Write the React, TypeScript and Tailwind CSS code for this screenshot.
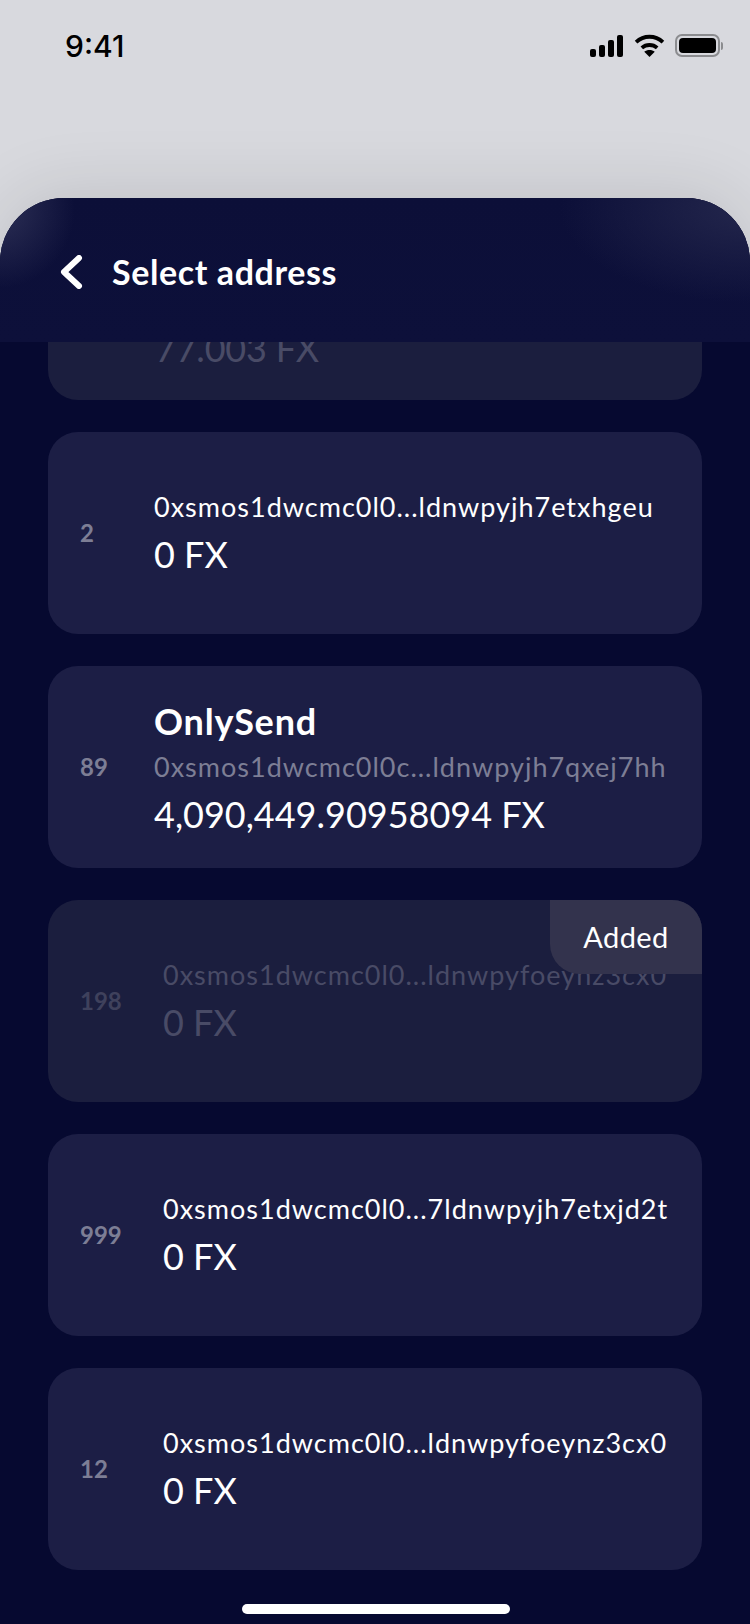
import type { ReactNode } from "react";

const font = "font-['Lato','Noto_Sans',sans-serif]";

function StatusBar() {
    return (
        <div className="flex h-[198px] items-start justify-between pl-[65px] pr-[27px] pt-[27px]">
            <span className="font-['Inter',sans-serif] text-[30px] font-medium leading-[38px] text-black">9:41</span>
            <div className="flex items-center pt-[7px]">
                <svg width="33" height="22" viewBox="0 0 33 22" fill="#000">
                    <rect x="0" y="14" width="6" height="8" rx="2" />
                    <rect x="9" y="10" width="6" height="12" rx="2" />
                    <rect x="18" y="5" width="6" height="17" rx="2" />
                    <rect x="27" y="0" width="6" height="22" rx="2" />
                </svg>
                <svg className="ml-[11px]" width="31" height="23" viewBox="0 0 32 24" fill="none" stroke="#000" strokeWidth="4">
                    <path d="M2 8.5C10 1 22 1 30 8.5" />
                    <path d="M8 14.5C12.5 10.5 19.5 10.5 24 14.5" />
                    <path d="M16 24L10.5 18.5C13.5 16 18.5 16 21.5 18.5Z" fill="#000" stroke="none" />
                </svg>
                <div className="ml-[10px] flex items-center">
                    <div className="h-[23px] w-[45px] rounded-[7px] border-2 border-[#8b8c8f] p-[2px]">
                        <div className="h-full w-full rounded-[4px] bg-black" />
                    </div>
                    <div className="ml-[1px] h-[8px] w-[2px] rounded-r-full bg-[#8b8c8f]" />
                </div>
            </div>
        </div>
    );
}

function Card({ num, numW, children, dim }: { num: string; numW: string; children: ReactNode; dim?: boolean }) {
    return (
        <div className={`relative flex h-[202px] shrink-0 items-center overflow-hidden rounded-[30px] pl-[32px] ${dim ? "bg-[#1b1e3e]" : "bg-[#1c1e45]"}`}>
            <span className={`${numW} shrink-0 text-[24px] font-bold ${dim ? "text-[#3f415c]" : "text-[#7d7e95]"}`}>{num}</span>
            <div className="flex flex-col pb-[2px]">{children}</div>
        </div>
    );
}

function Address({ text, muted, dim }: { text: string; muted?: boolean; dim?: boolean }) {
    const color = dim ? "text-[#494b66]" : muted ? "text-[#7d7e95]" : "text-white";
    return <div className={`whitespace-nowrap text-[27px] leading-[36px] tracking-[1px] ${color}`}>{text}</div>;
}

function Amount({ text, dim }: { text: string; dim?: boolean }) {
    return <div className={`mt-[8px] text-[36px] leading-[42px] ${dim ? "text-[#494b66]" : "text-white"}`}>{text}</div>;
}

export default function App() {
    return (
        <div className={`relative h-[1624px] w-[750px] overflow-hidden bg-[#d8d9de] ${font}`}>
            <StatusBar />
            <div className="flex h-[1426px] flex-col overflow-hidden rounded-t-[64px] bg-[#060930] shadow-[0_-6px_70px_rgba(0,0,0,0.11)]">
                <div className="relative z-10 flex h-[144px] shrink-0 items-center gap-[28px] bg-[radial-gradient(ellipse_75px_80px_at_0px_10px,#2c2f55,transparent),radial-gradient(ellipse_190px_95px_at_100%_10px,#23264c,transparent),linear-gradient(#0c0f38,#0d103a)] pl-[60px] pt-[4px]">
                    <svg width="24" height="34" viewBox="0 0 24 34" fill="none" stroke="#fff" strokeWidth="6" strokeLinecap="round" strokeLinejoin="round">
                        <path d="M19 3L4 17L19 31" />
                    </svg>
                    <span className="text-[34px] font-bold leading-none tracking-[0.6px] text-white">Select address</span>
                </div>
                <div className="flex flex-col gap-[32px] px-[48px]">
                    <div className="relative -mt-[144px] flex h-[202px] shrink-0 items-end rounded-[30px] bg-[#1b1e3e] pb-[31px] pl-[107px]">
                        <span className="text-[36px] leading-[42px] tracking-[-0.2px] text-[#494b66]">77.003 FX</span>
                    </div>
                    <Card num="2" numW="w-[74px]">
                        <Address text="0xsmos1dwcmc0l0...ldnwpyjh7etxhgeu" />
                        <Amount text="0 FX" />
                    </Card>
                    <Card num="89" numW="w-[74px]">
                        <div className="mb-[7px] mt-[2px] text-[36px] font-bold leading-[42px] tracking-[0.8px] text-white">OnlySend</div>
                        <Address text="0xsmos1dwcmc0l0c...ldnwpyjh7qxej7hh" muted />
                        <Amount text="4,090,449.90958094 FX" />
                    </Card>
                    <Card num="198" numW="w-[83px]" dim>
                        <Address text="0xsmos1dwcmc0l0...ldnwpyfoeynz3cx0" dim />
                        <Amount text="0 FX" dim />
                        <div className="absolute right-0 top-0 flex h-[74px] w-[152px] items-center justify-center rounded-bl-[30px] bg-[#33334d] text-[29px] tracking-[0.4px] text-white">
                            Added
                        </div>
                    </Card>
                    <Card num="999" numW="w-[83px]">
                        <Address text="0xsmos1dwcmc0l0...7ldnwpyjh7etxjd2t" />
                        <Amount text="0 FX" />
                    </Card>
                    <Card num="12" numW="w-[83px]">
                        <Address text="0xsmos1dwcmc0l0...ldnwpyfoeynz3cx0" />
                        <Amount text="0 FX" />
                    </Card>
                </div>
            </div>
            <div className="absolute bottom-[10px] left-[242px] h-[10px] w-[268px] rounded-full bg-white" />
        </div>
    );
}
